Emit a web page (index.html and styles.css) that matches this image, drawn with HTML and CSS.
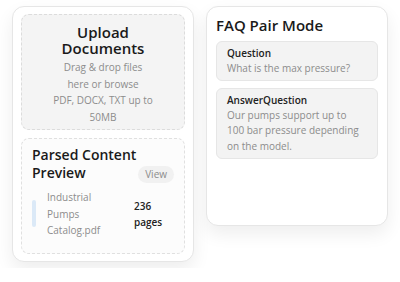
FILE: index.html
```html
<!DOCTYPE html>
<html lang="en">
<head>
    <meta charset="UTF-8">
    <title>Document Parser</title>
    <link rel="stylesheet" href="styles.css">
</head>
<body>
    <div class="layout">
        <div class="card">
            <div class="upload-box">
                <h2>Upload Documents</h2>
                <p>Drag &amp; drop files here or browse</p>
                <p>PDF, DOCX, TXT up to 50MB</p>
            </div>
            <div class="preview-box">
                <div class="preview-head">
                    <h3>Parsed Content<br>Preview</h3>
                    <button class="view-btn">View</button>
                </div>
                <div class="file-row">
                    <span class="file-bar"></span>
                    <span class="file-name">Industrial Pumps Catalog.pdf</span>
                    <span class="file-pages">236 pages</span>
                </div>
            </div>
        </div>

        <div class="card faq-card">
            <h3>FAQ Pair Mode</h3>
            <div class="faq-item">
                <div class="faq-label">Question</div>
                <div class="faq-text">What is the max pressure?</div>
            </div>
            <div class="faq-item">
                <div class="faq-label">AnswerQuestion</div>
                <div class="faq-text">Our pumps support up to 100 bar pressure depending on the model.</div>
            </div>
        </div>
    </div>
</body>
</html>
```

FILE: styles.css
```css
body {
    margin: 0;
    background-color: #fff;
    font-family: "Open Sans", "Noto Sans", sans-serif;
}

.layout {
    display: flex;
    align-items: flex-start;
    gap: 12px;
    padding: 6px 12px;
}

.card {
    width: 182px;
    box-sizing: border-box;
    background-color: #fff;
    border: 1px solid #e6e6e6;
    border-radius: 12px;
    box-shadow: 0 8px 18px rgba(0, 0, 0, 0.07);
    padding: 7px 8px;
    display: flex;
    flex-direction: column;
    gap: 8px;
}

.upload-box {
    height: 116px;
    box-sizing: border-box;
    background-color: #f4f4f4;
    border: 1px dashed #dcdcdc;
    border-radius: 8px;
    padding: 9px 12px 0;
    text-align: center;
}

.upload-box h2 {
    margin: 0 0 3px;
    font-size: 15px;
    line-height: 16px;
    font-weight: 600;
    color: #1a1a1a;
}

.upload-box p {
    margin: 0 auto;
    width: 90px;
    font-size: 10px;
    line-height: 16.5px;
    color: #8c8c8c;
}

.upload-box p + p {
    width: 120px;
}

.preview-box {
    height: 116px;
    box-sizing: border-box;
    background-color: #fcfcfc;
    border: 1px dashed #e0e0e0;
    border-radius: 8px;
    padding: 7px 10px 0;
}

.preview-head {
    display: flex;
    justify-content: space-between;
    align-items: flex-end;
}

.preview-head h3 {
    margin: 0;
    width: 100px;
    white-space: nowrap;
    font-size: 14px;
    line-height: 18px;
    font-weight: 600;
    color: #1a1a1a;
}

.view-btn {
    border: none;
    background-color: #f1f1f1;
    color: #8c8c8c;
    font-family: inherit;
    font-size: 10px;
    line-height: 13px;
    padding: 2px 7px;
    border-radius: 9px;
    margin-bottom: -1px;
}

.file-row {
    display: flex;
    align-items: center;
    gap: 11px;
    margin-top: 7px;
}

.file-bar {
    width: 4px;
    height: 27px;
    border-radius: 2px;
    background-color: #dbe9f7;
    flex: none;
}

.file-name {
    width: 78px;
    font-size: 10px;
    line-height: 16.5px;
    color: #8c8c8c;
}

.file-pages {
    width: 34px;
    font-size: 10px;
    line-height: 16px;
    font-weight: 600;
    color: #222;
    margin-left: -2px;
}

.faq-card {
    height: 220px;
    padding: 10px 9px;
    gap: 7px;
}

.faq-card h3 {
    margin: 0 0 1px;
    font-size: 15px;
    line-height: 16px;
    font-weight: 600;
    color: #1a1a1a;
}

.faq-item {
    background-color: #f3f3f3;
    border: 1px solid #e6e6e6;
    border-radius: 6px;
    padding: 3px 10px;
}

.faq-label {
    font-size: 10px;
    line-height: 16px;
    font-weight: 600;
    color: #222;
}

.faq-text {
    max-width: 134px;
    font-size: 10px;
    line-height: 15.7px;
    color: #8c8c8c;
}
```
